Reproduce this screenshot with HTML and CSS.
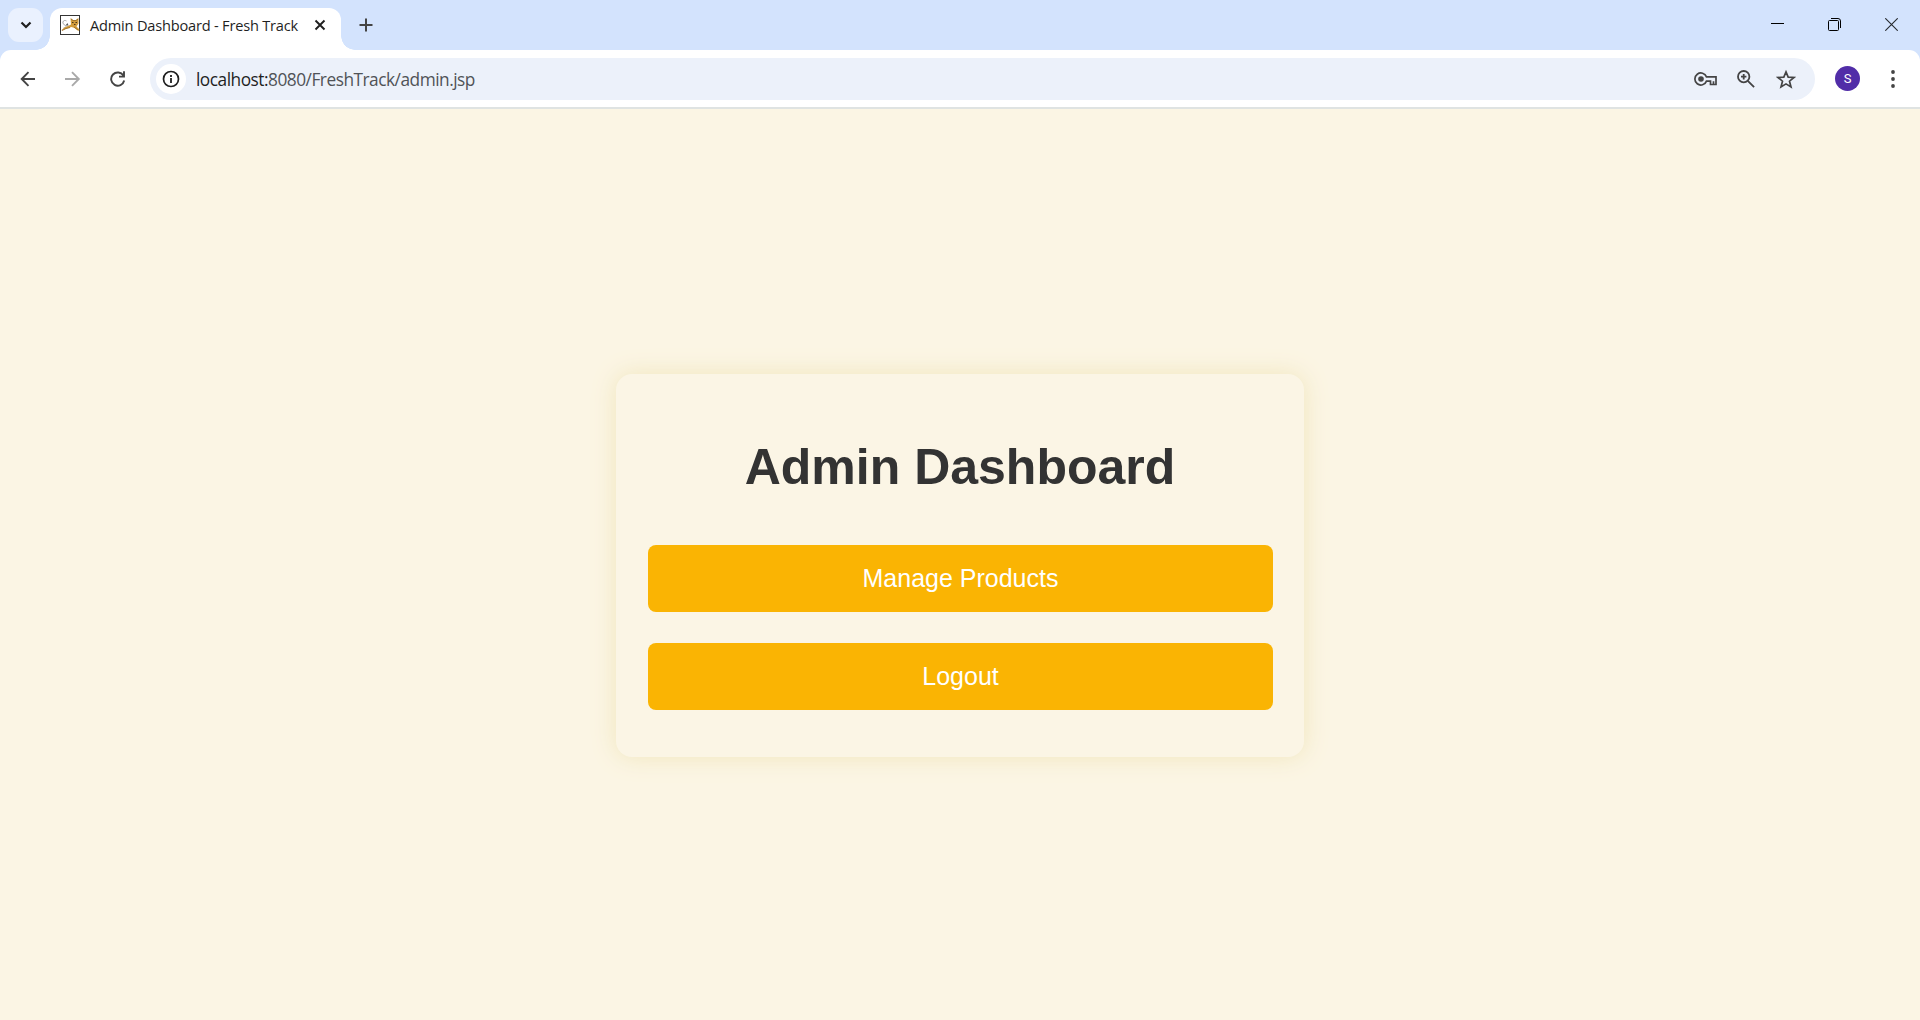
FILE: index.html
```html
<!DOCTYPE html>
<html lang="en">
<head>
<meta charset="utf-8">
<title>Admin Dashboard - Fresh Track</title>
<link rel="stylesheet" href="styles.css">
</head>
<body>
<div class="window">
  <header class="tabstrip">
    <button class="tab-search" aria-label="Search tabs"><svg width="12" height="8" viewBox="0 0 12 8"><path d="M1.500 1.500 6 6l4.500-4.500" fill="none" stroke="#1f1f1f" stroke-width="2.200"/></svg></button>
    <div class="tab">
      <svg class="favicon" width="20" height="20" viewBox="0 0 20 20">
        <rect x=".5" y=".5" width="19" height="19" fill="#fff" stroke="#343434"/>
        <path d="M6.500 6C3.500 4 1.500 8 4 9.500s3 3-.5 3.500" fill="none" stroke="#a5a5a5"/>
        <path d="M1 15.500l3.500-3L9 10.500l2-1L10.500 3l2.500 2h3l2.500-2v5.500l-2 3 3 3-1 1.500-4-3-3-1-5 1.500-4 1.500z" fill="#d29b3b"/>
        <path d="M2 15.500l4-2 4-1M14 12l4 3M11 4l2 1.500h3L18 4" fill="none" stroke="#a3752b"/>
        <path d="M12 7.500h1.500M15.500 7.500H17M14 9.500h1.500" stroke="#4b3719"/>
        <path d="M5.500 10.500l2-2.500 1 2.500z" fill="#555"/>
      </svg>
      <span class="tab-title">Admin Dashboard - Fresh Track</span>
      <svg class="tab-close" width="12" height="12" viewBox="0 0 12 12"><path d="M1.500 1.500l9 9M10.500 1.500l-9 9" stroke="#1f1f1f" stroke-width="1.900"/></svg>
    </div>
    <svg class="new-tab" width="14" height="14" viewBox="0 0 14 14"><path d="M7 .5v13M.5 7h13" stroke="#444" stroke-width="2"/></svg>
    <div class="window-controls">
      <svg width="13" height="13" viewBox="0 0 13 13"><path d="M0 5.500h13" stroke="#000"/></svg>
      <svg width="13" height="13" viewBox="0 0 13 13"><rect x=".5" y="2.500" width="10" height="10" rx="1" fill="none" stroke="#000"/><path d="M3 .5h7a2.500 2.500 0 0 1 2.500 2.500v7" fill="none" stroke="#000"/></svg>
      <svg width="13" height="13" viewBox="0 0 13 13"><path d="M.3.3l12.400 12.400M12.700.3.3 12.700" stroke="#26292e" stroke-width="1.100"/></svg>
    </div>
  </header>
  <nav class="toolbar">
    <div class="nav-icons">
      <svg width="16" height="16" viewBox="0 0 16 16"><path d="M15 8H2M8.500 1.200 1.700 8l6.800 6.800" fill="none" stroke="#444" stroke-width="1.900"/></svg>
      <svg width="16" height="16" viewBox="0 0 16 16"><path d="M0 8h13M7 1.200 13.800 8 7 14.800" fill="none" stroke="#a9a9a9" stroke-width="1.900"/></svg>
      <svg width="16" height="16" viewBox="0 0 16 16"><path d="M13.400 4.600A6.600 6.600 0 1 0 14.200 9.500M9 5.600h5V.3" fill="none" stroke="#444" stroke-width="1.900"/></svg>
    </div>
    <div class="omnibox">
      <span class="site-info"><svg width="18" height="18" viewBox="0 0 18 18"><circle cx="9" cy="9" r="7.500" fill="none" stroke="#1f1f1f" stroke-width="1.700"/><path d="M9 8v5M9 5v2" stroke="#1f1f1f" stroke-width="1.800"/></svg></span>
      <span class="url">localhost:<span class="path">8080/FreshTrack/admin.jsp</span></span>
      <div class="actions">
        <svg width="24" height="14" viewBox="0 0 24 14"><path d="M12.500 4.900A6 6 0 1 0 12.500 9.100H16.500V12.500H22V4.900zM19.500 12V9.200" fill="none" stroke="#444" stroke-width="1.700"/><circle cx="7" cy="7" r="2.800" fill="#444"/></svg>
        <svg width="20" height="18" viewBox="0 0 20 18"><circle cx="6.700" cy="6.700" r="5.700" fill="none" stroke="#444" stroke-width="1.800"/><path d="M10.800 10.800l6.300 6.300M6.700 4v5.400M4 6.700h5.400" stroke="#444" stroke-width="1.800"/></svg>
        <svg width="20" height="20" viewBox="0 0 20 20"><path d="M10 2.900l2.200 5.200 5.800.4-4.500 3.700 1.500 5.800-5-3.100-5 3.100 1.500-5.800L2 8.500l5.800-.4z" fill="none" stroke="#444" stroke-width="1.700"/></svg>
      </div>
    </div>
    <span class="avatar">S</span>
    <svg class="menu" width="4" height="18" viewBox="0 0 4 18"><g fill="#444"><circle cx="2" cy="2" r="1.900"/><circle cx="2" cy="9" r="1.900"/><circle cx="2" cy="16" r="1.900"/></g></svg>
  </nav>
  <main class="page">
    <section class="card">
      <h1>Admin Dashboard</h1>
      <a class="btn">Manage Products</a>
      <a class="btn">Logout</a>
    </section>
  </main>
</div>
</body>
</html>
```
FILE: styles.css
```css
* { box-sizing: border-box; }
body { margin: 0; }
svg { display: block; flex: none; }
.window { height: 1020px; display: flex; flex-direction: column; overflow: hidden; background: #d3e3fd; font-family: "Open Sans", "Noto Sans", sans-serif; }
.tabstrip { height: 50px; flex: none; display: flex; padding: 8px 22px 0 8px; }
.tab-search { width: 35px; height: 34px; border: 0; padding: 0; border-radius: 11px; background: #eaf1fe; display: flex; align-items: center; justify-content: center; }
.tab { position: relative; width: 291px; height: 42px; margin-left: 7px; padding: 0 15px 8px 10px; border-radius: 12px 12px 0 0; background: #fff; display: flex; align-items: center; }
.tab::before, .tab::after { content: ""; position: absolute; bottom: 0; width: 14px; height: 14px; }
.tab::before { right: 100%; background: radial-gradient(circle at 0 0, transparent 13.500px, #fff 14px); }
.tab::after { left: 100%; background: radial-gradient(circle at 100% 0, transparent 13.500px, #fff 14px); }
.tab-title { margin-left: 10px; width: 208px; font-size: 14.600px; line-height: 20px; color: #1f1f1f; white-space: nowrap; letter-spacing: -.2px; }
.tab-close { margin-left: auto; }
.new-tab { margin: 10px 0 0 18px; }
.window-controls { margin: 10px 0 0 auto; display: flex; gap: 44px; }
.toolbar { height: 59px; flex: none; display: flex; align-items: center; background: #fff; border-bottom: 2px solid #dfe3e2; border-radius: 11px 11px 0 0; padding: 0 25px 0 20px; }
.nav-icons { display: flex; gap: 29px; width: 130px; }
.omnibox { width: 1665px; height: 42px; border-radius: 21px; background: #ecf1fa; display: flex; align-items: center; padding: 0 19px 0 6px; }
.site-info { width: 30px; height: 30px; border-radius: 50%; background: #fff; display: flex; align-items: center; justify-content: center; }
.url { margin-left: 10px; padding-top: 2px; font-size: 17.300px; line-height: 24px; color: #1f1f1f; white-space: nowrap; letter-spacing: -.49px; }
.path { color: #505357; }
.actions { margin-left: auto; display: flex; align-items: center; gap: 19px; }
.avatar { width: 25px; height: 25px; margin-left: 20px; border-radius: 50%; background: #512da8; color: #fff; font: 13px/25px Roboto, sans-serif; text-align: center; }
.menu { margin-left: auto; }
.page { flex: 1; display: flex; align-items: center; justify-content: center; padding-top: 2px; background: #fbf5e4; }
.card { width: 688px; height: 383px; padding: 32px; border-radius: 16px; background: #fbf5e5; box-shadow: 0 0 24px #f1e6bd; text-align: center; font-family: "Liberation Sans", Arial, sans-serif; }
h1 { margin: 31px 0 47px; font-size: 50px; line-height: 61px; color: #333; }
.btn { display: block; width: 625px; height: 67px; margin-bottom: 31px; border-radius: 8px; background: #fab403; color: #fff; font-size: 25px; line-height: 67px; }
```
